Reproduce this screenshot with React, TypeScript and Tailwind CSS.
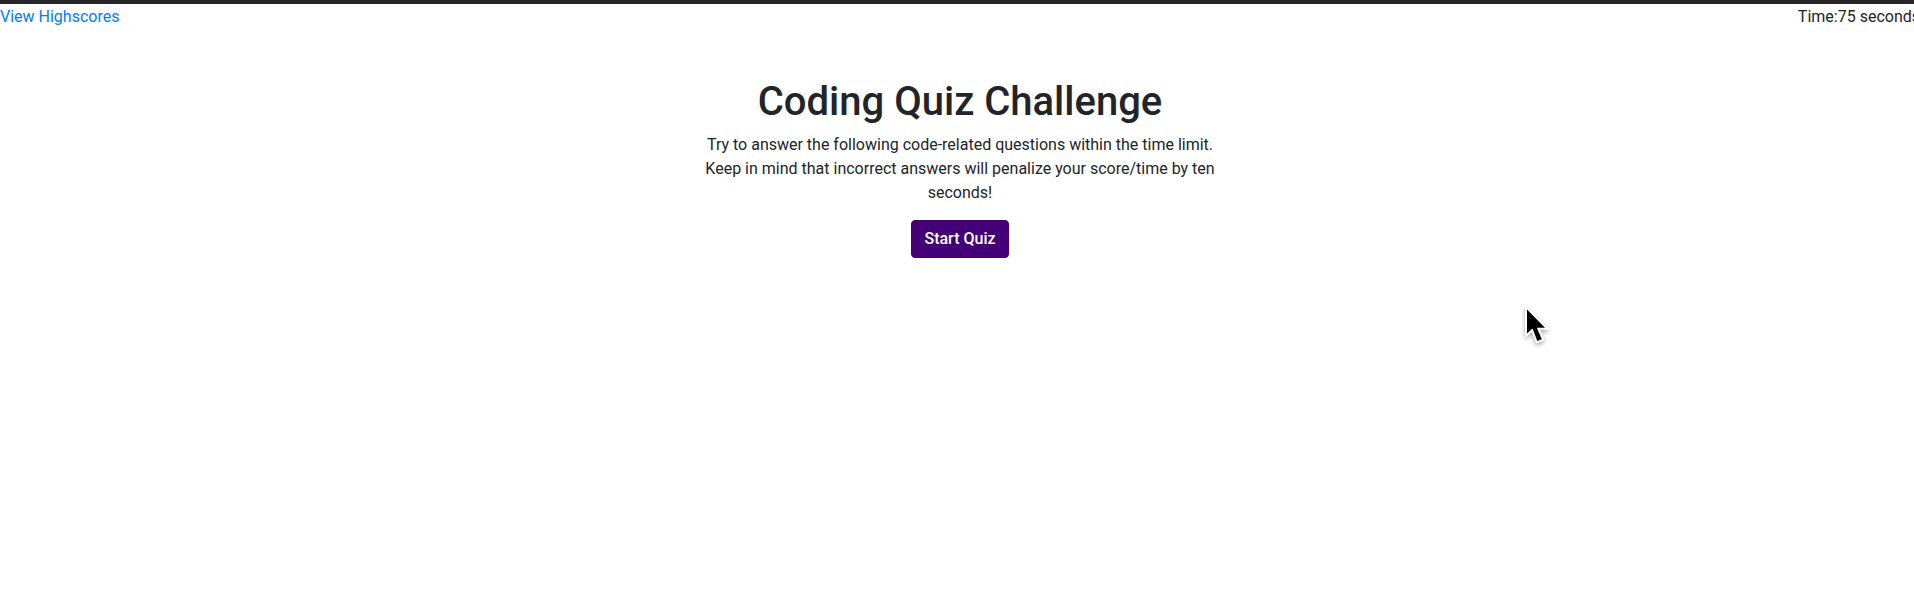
import React from "react";

function Pointer() {
  return (
    <svg
      aria-hidden="true"
      className="pointer-events-none absolute left-[1518px] top-[300px] h-12 w-10"
      viewBox="0 0 40 48"
      style={{ filter: "drop-shadow(0px 2px 2px rgba(0,0,0,0.35))" }}
    >
      <path
        d="M9 9.5V33.5L14.5 28.5L19.3 41L23.9 39.2L18.8 27.8H27Z"
        fill="#000"
        stroke="#fff"
        strokeWidth="4"
        strokeLinejoin="miter"
        paintOrder="stroke"
      />
    </svg>
  );
}

export default function App() {
  return (
    <div className="relative min-h-screen overflow-hidden bg-white font-['Roboto',sans-serif] text-base text-[#212529]">
      <div className="-mr-1.5">
        <div className="h-1 bg-[#262626]" />
        <header className="flex justify-between pt-px">
          <a href="#highscores" className="text-[#007bff]">
            View Highscores
          </a>
          <div>
            Time:<span>75</span> seconds
          </div>
        </header>
        <main className="mx-auto mt-12 flex max-w-[530px] flex-col items-center text-center">
          <h1 className="mb-1.5 whitespace-nowrap text-[40px] font-medium leading-[50px]">
            Coding Quiz Challenge
          </h1>
          <p className="mb-[15px]">
            Try to answer the following code-related questions within the time limit. Keep in mind
            that incorrect answers will penalize your score/time by ten seconds!
          </p>
          <button
            type="button"
            className="rounded border border-[#440077] bg-[#440077] px-3 py-1.5 font-medium text-white"
          >
            Start Quiz
          </button>
        </main>
      </div>
      <Pointer />
    </div>
  );
}
